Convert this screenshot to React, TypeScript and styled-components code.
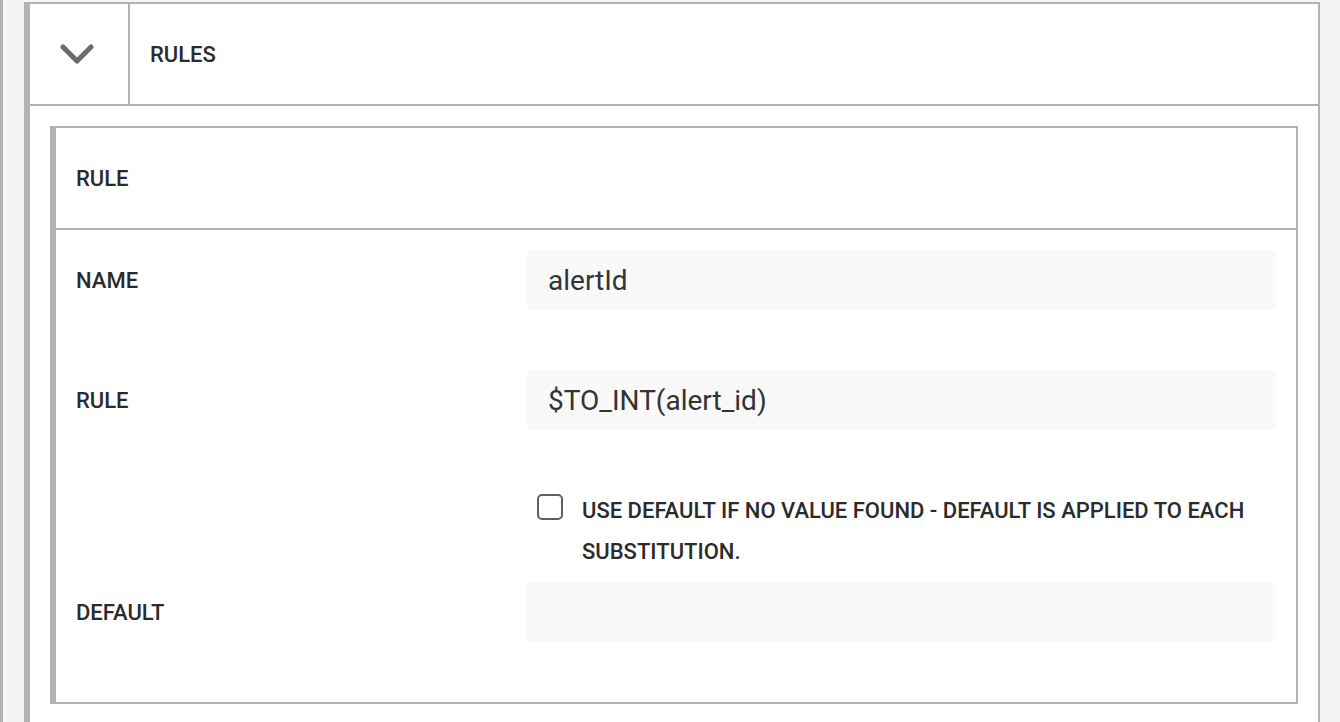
import React from "react";
import styled, { createGlobalStyle } from "styled-components";

const Global = createGlobalStyle`
  html, body {
    margin: 0;
    padding: 0;
    background: #f4f4f4;
    font-family: Roboto, "Liberation Sans", sans-serif;
    color: #2b2b2b;
  }
  * { box-sizing: border-box; }
`;

const Page = styled.div`
  height: 722px;
  overflow: hidden;
  border-left: 3px solid #b3b3b3;
  padding: 2px 20px 0 21px;
  background: #f4f4f4;
`;

const Panel = styled.section`
  min-height: 740px;
  background: #fff;
  border: 2px solid #b3b3b3;
  border-left-width: 6px;
  border-bottom: none;
`;

const PanelHeader = styled.div`
  display: flex;
  height: 102px;
  border-bottom: 2px solid #b3b3b3;
`;

const ToggleCell = styled.button`
  width: 100px;
  flex: none;
  display: flex;
  align-items: center;
  justify-content: center;
  background: none;
  border: none;
  border-right: 2px solid #b3b3b3;
  padding: 0 4px 0 0;
  cursor: pointer;
`;

const Title = styled.div`
  display: flex;
  align-items: center;
  padding-left: 20px;
  font-size: 22px;
  font-weight: 500;
  color: #2b2b2b;
`;

const PanelBody = styled.div`
  padding: 20px;
`;

const Card = styled.div`
  border: 2px solid #b3b3b3;
  border-left-width: 6px;
`;

const CardHeader = styled.div`
  height: 102px;
  display: flex;
  align-items: center;
  padding-left: 20px;
  border-bottom: 2px solid #b3b3b3;
  font-size: 22px;
  font-weight: 500;
`;

const CardBody = styled.div`
  padding: 20px 20px 0;
`;

const Row = styled.div<{ $gap?: number }>`
  display: grid;
  grid-template-columns: 3fr 5fr;
  align-items: center;
  margin-bottom: ${(p) => p.$gap ?? 60}px;
`;

const Label = styled.label`
  font-size: 22px;
  font-weight: 500;
  color: #2b2b2b;
`;

const Input = styled.div`
  height: 60px;
  display: flex;
  align-items: center;
  padding-left: 22px;
  background: #f9f9f9;
  border-radius: 7px;
  font-size: 28px;
  color: #333;
`;

const CheckWrap = styled.div`
  display: flex;
  align-items: flex-start;
  padding-left: 11px;
`;

const Box = styled.span`
  width: 26px;
  height: 26px;
  flex: none;
  margin-top: 4px;
  margin-right: 19px;
  border: 2px solid #5f5f5f;
  border-radius: 5px;
  background: #fff;
`;

const CheckText = styled.span`
  font-size: 22px;
  font-weight: 500;
  line-height: 41px;
  color: #2b2b2b;
`;

const Chevron = () => (
  <svg width="34" height="20" viewBox="0 0 34 20">
    <polyline
      points="3,3 17,17 31,3"
      fill="none"
      stroke="#6b6b6e"
      strokeWidth="5"
      strokeLinecap="round"
      strokeLinejoin="round"
    />
  </svg>
);

export default function App() {
  return (
    <>
      <Global />
      <Page>
        <Panel>
          <PanelHeader>
            <ToggleCell aria-label="collapse">
              <Chevron />
            </ToggleCell>
            <Title>RULES</Title>
          </PanelHeader>
          <PanelBody>
            <Card>
              <CardHeader>RULE</CardHeader>
              <CardBody>
                <Row>
                  <Label>NAME</Label>
                  <Input>alertId</Input>
                </Row>
                <Row>
                  <Label>RULE</Label>
                  <Input>$TO_INT(alert_id)</Input>
                </Row>
                <Row $gap={10}>
                  <span />
                  <CheckWrap>
                    <Box />
                    <CheckText>
                      USE DEFAULT IF NO VALUE FOUND - DEFAULT IS APPLIED TO EACH SUBSTITUTION.
                    </CheckText>
                  </CheckWrap>
                </Row>
                <Row>
                  <Label>DEFAULT</Label>
                  <Input />
                </Row>
              </CardBody>
            </Card>
          </PanelBody>
        </Panel>
      </Page>
    </>
  );
}
